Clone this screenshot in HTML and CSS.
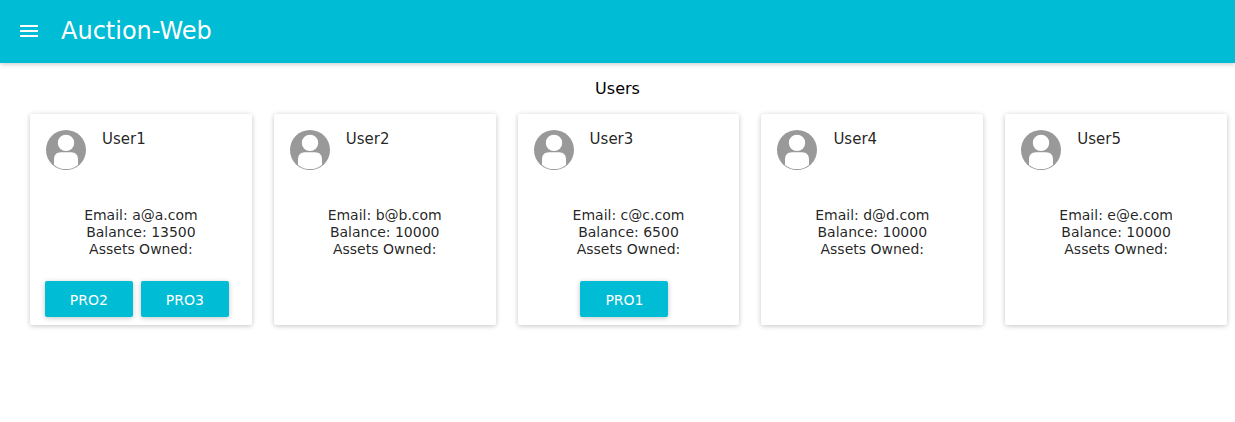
FILE: index.html
```
<!DOCTYPE html>
<html lang="en">
<head>
<meta charset="utf-8">
<title>Auction-Web</title>
<link rel="stylesheet" href="styles.css">
</head>
<body>
<svg class="defs" aria-hidden="true">
  <symbol id="avatar" viewBox="0 0 40 40">
    <circle cx="20" cy="20" r="20" fill="#999"/>
    <circle cx="20" cy="12.900" r="8.200" fill="#fff"/>
    <path d="M8 34.900V29.500C8 25 10.500 22.200 15 22.200H25C29.500 22.200 32 25 32 29.500V34.900A19.200 19.200 0 0 1 8 34.900Z" fill="#fff"/>
  </symbol>
</svg>
<header class="app-bar">
  <button class="menu" type="button" aria-label="Menu">
    <svg viewBox="0 0 24 24" width="24" height="24"><path fill="#fff" d="M3 18h18v-2H3v2zm0-5h18v-2H3v2zm0-7v2h18V6H3z"/></svg>
  </button>
  <h1 class="title">Auction-Web</h1>
</header>
<main>
  <h2 class="heading">Users</h2>
  <div class="users">
    <article class="card">
      <div class="card-head"><svg class="avatar"><use href="#avatar"/></svg><h3 class="name">User1</h3></div>
      <div class="details"><p>Email: a@a.com</p><p>Balance: 13500</p><p>Assets Owned:</p></div>
      <div class="assets"><button class="asset" type="button">PRO2</button><button class="asset" type="button">PRO3</button></div>
    </article>
    <article class="card">
      <div class="card-head"><svg class="avatar"><use href="#avatar"/></svg><h3 class="name">User2</h3></div>
      <div class="details"><p>Email: b@b.com</p><p>Balance: 10000</p><p>Assets Owned:</p></div>
    </article>
    <article class="card">
      <div class="card-head"><svg class="avatar"><use href="#avatar"/></svg><h3 class="name">User3</h3></div>
      <div class="details"><p>Email: c@c.com</p><p>Balance: 6500</p><p>Assets Owned:</p></div>
      <div class="assets"><button class="asset" type="button">PRO1</button></div>
    </article>
    <article class="card">
      <div class="card-head"><svg class="avatar"><use href="#avatar"/></svg><h3 class="name">User4</h3></div>
      <div class="details"><p>Email: d@d.com</p><p>Balance: 10000</p><p>Assets Owned:</p></div>
    </article>
    <article class="card">
      <div class="card-head"><svg class="avatar"><use href="#avatar"/></svg><h3 class="name">User5</h3></div>
      <div class="details"><p>Email: e@e.com</p><p>Balance: 10000</p><p>Assets Owned:</p></div>
    </article>
  </div>
</main>
</body>
</html>
```
FILE: styles.css
```
* {
  box-sizing: border-box;
}

body {
  margin: 0;
  background: #fff;
  color: #000;
  font-family: "DejaVu Sans", sans-serif;
}

h1, h2, h3, p {
  margin: 0;
  font-weight: 400;
}

.defs {
  display: none;
}

.app-bar {
  display: flex;
  align-items: center;
  gap: 20px;
  padding: 0 17px 1px;
  background: #00bcd4;
  box-shadow: 0 1px 6px rgba(0, 0, 0, 0.12), 0 1px 4px rgba(0, 0, 0, 0.12);
}

.menu {
  display: flex;
  padding: 0;
  border: 0;
  background: none;
  cursor: pointer;
}

.title {
  color: #fff;
  font-size: 24px;
  line-height: 62px;
}

.heading {
  padding-top: 16px;
  font-size: 16px;
  line-height: 19px;
  text-align: center;
}

.users {
  display: grid;
  grid-template-columns: repeat(5, 1fr);
  gap: 22px;
  padding: 16px 8px 16px 30px;
}

.card {
  min-height: 211px;
  border-radius: 2px;
  background: #fff;
  color: rgba(0, 0, 0, 0.87);
  box-shadow: 0 1px 6px rgba(0, 0, 0, 0.12), 0 1px 4px rgba(0, 0, 0, 0.12);
}

.card-head {
  display: flex;
  gap: 16px;
  padding: 16px;
}

.avatar {
  width: 40px;
  height: 40px;
}

.name {
  font-size: 15px;
  line-height: 18px;
}

.details {
  padding: 21px 16px;
  font-size: 14px;
  line-height: 17px;
  text-align: center;
}

.assets {
  display: flex;
  flex-wrap: wrap;
  justify-content: center;
  gap: 8px;
  padding: 2px 12px 8px 4px;
}

.asset {
  width: 88px;
  height: 36px;
  padding: 2px 0 0;
  border: 0;
  border-radius: 2px;
  background: #00bcd4;
  color: #fff;
  font-family: inherit;
  font-size: 14px;
  box-shadow: 0 1px 6px rgba(0, 0, 0, 0.12), 0 1px 4px rgba(0, 0, 0, 0.12);
  cursor: pointer;
}
```
